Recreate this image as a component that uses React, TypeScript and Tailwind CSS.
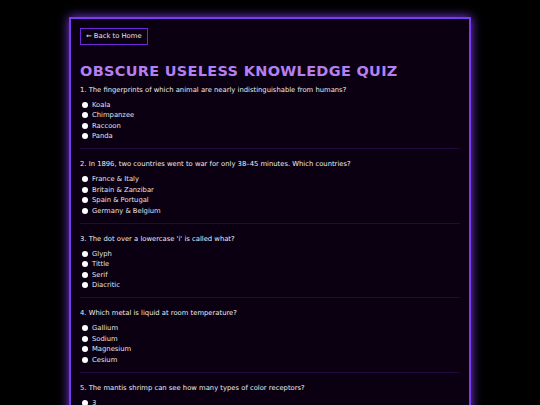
import React from 'react';

interface Question {
  text: string;
  options: string[];
}

const questions: Question[] = [
  {
    text: 'The fingerprints of which animal are nearly indistinguishable from humans?',
    options: ['Koala', 'Chimpanzee', 'Raccoon', 'Panda'],
  },
  {
    text: 'In 1896, two countries went to war for only 38–45 minutes. Which countries?',
    options: ['France & Italy', 'Britain & Zanzibar', 'Spain & Portugal', 'Germany & Belgium'],
  },
  {
    text: "The dot over a lowercase 'i' is called what?",
    options: ['Glyph', 'Tittle', 'Serif', 'Diacritic'],
  },
  {
    text: 'Which metal is liquid at room temperature?',
    options: ['Gallium', 'Sodium', 'Magnesium', 'Cesium'],
  },
  {
    text: 'The mantis shrimp can see how many types of color receptors?',
    options: ['3', '6', '12', '16'],
  },
];

export default function App() {
  return (
    <div
      className="h-[405px] bg-black flex justify-center pt-[17px] overflow-hidden"
      style={{ fontFamily: '"DejaVu Sans", Verdana, sans-serif' }}
    >
      <div className="w-[402px] h-fit border-2 border-[#7c3aed] bg-[#0a0012] shadow-[0_0_10px_#7c3aed] px-[9px] pt-[9px] pb-6">
        <button className="block h-[17px] px-[5px] border border-[#6d28d9] text-[6.8px] text-[#e4e4e7] leading-none">
          ← Back to Home
        </button>
        <h1 className="mt-[19px] text-[14.5px] font-bold tracking-[0.3px] text-[#b57ff0] leading-none">
          OBSCURE USELESS KNOWLEDGE QUIZ
        </h1>
        <div className="mt-[6px]">
          {questions.map((q, i) => (
            <div key={i} className={i > 0 ? 'border-t border-[#24083f] mt-[6.5px] pt-[10px]' : ''}>
              <p className="text-[6.8px] text-[#ececec] leading-[10px]">
                {i + 1}. {q.text}
              </p>
              <ul className="mt-[5px]">
                {q.options.map(o => (
                  <li key={o} className="flex items-center h-[10.5px] pl-[2px] text-[6.8px] text-[#e4e4e7]">
                    <span className="w-[6px] h-[6px] rounded-full bg-white mr-[4px]" />
                    {o}
                  </li>
                ))}
              </ul>
            </div>
          ))}
        </div>
      </div>
    </div>
  );
}
